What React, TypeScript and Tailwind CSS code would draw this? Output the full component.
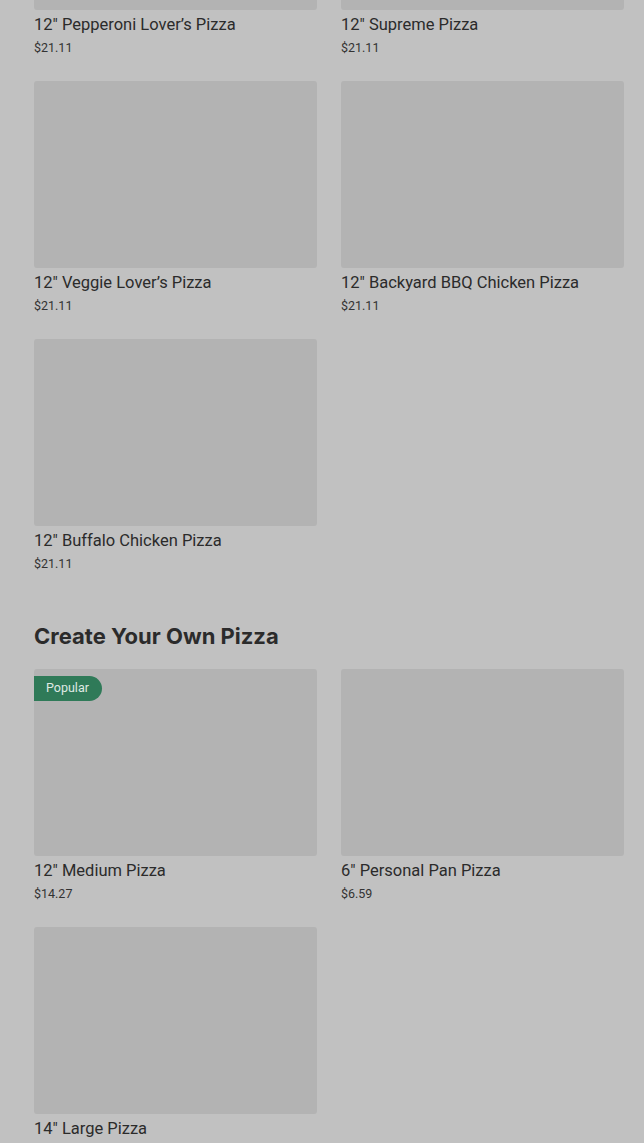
import React from "react";

type Item = { name: string; price: string; badge?: string };

const section1: Item[] = [
  { name: '12" Pepperoni Lover\u2019s Pizza', price: "$21.11" },
  { name: '12" Supreme Pizza', price: "$21.11" },
  { name: '12" Veggie Lover\u2019s Pizza', price: "$21.11" },
  { name: '12" Backyard BBQ Chicken Pizza', price: "$21.11" },
  { name: '12" Buffalo Chicken Pizza', price: "$21.11" },
];

const section2: Item[] = [
  { name: '12" Medium Pizza', price: "$14.27", badge: "Popular" },
  { name: '6" Personal Pan Pizza', price: "$6.59" },
  { name: '14" Large Pizza', price: "$19.99" },
];

function Card({ item }: { item: Item }) {
  return (
    <div className="flex flex-col">
      <div className="relative h-[187px] rounded-[3px] bg-[#b3b3b3]">
        {item.badge && (
          <span className="absolute left-0 top-[7px] flex h-[25px] items-center rounded-r-full bg-[#2f7a58] pl-[12px] pr-[13px] text-[12.5px] text-[#dfe9e3]">
            {item.badge}
          </span>
        )}
      </div>
      <div className="mt-[5px] text-[16.5px] leading-[20px] text-[#2b2b2b]">{item.name}</div>
      <div className="mt-[4px] text-[12.5px] leading-[18px] text-[#333333]">{item.price}</div>
    </div>
  );
}

export default function App() {
  return (
    <div
      className="min-h-[1143px] overflow-hidden bg-[#c1c1c1]"
      style={{ fontFamily: "Roboto, 'Liberation Sans', sans-serif" }}
    >
      <div className="mt-[-177px] pl-[34px] pr-[20px]">
        <div className="grid grid-cols-2 gap-x-[24px] gap-y-[24px]">
          {section1.map((it) => (
            <Card key={it.name} item={it} />
          ))}
        </div>
        <h2 className="mt-[49px] font-['Inter',sans-serif] text-[22px] font-bold leading-[28px] tracking-[0px] text-[#2b2b2b]">
          Create Your Own Pizza
        </h2>
        <div className="mt-[19px] grid grid-cols-2 gap-x-[24px] gap-y-[24px]">
          {section2.map((it) => (
            <Card key={it.name} item={it} />
          ))}
        </div>
      </div>
    </div>
  );
}
